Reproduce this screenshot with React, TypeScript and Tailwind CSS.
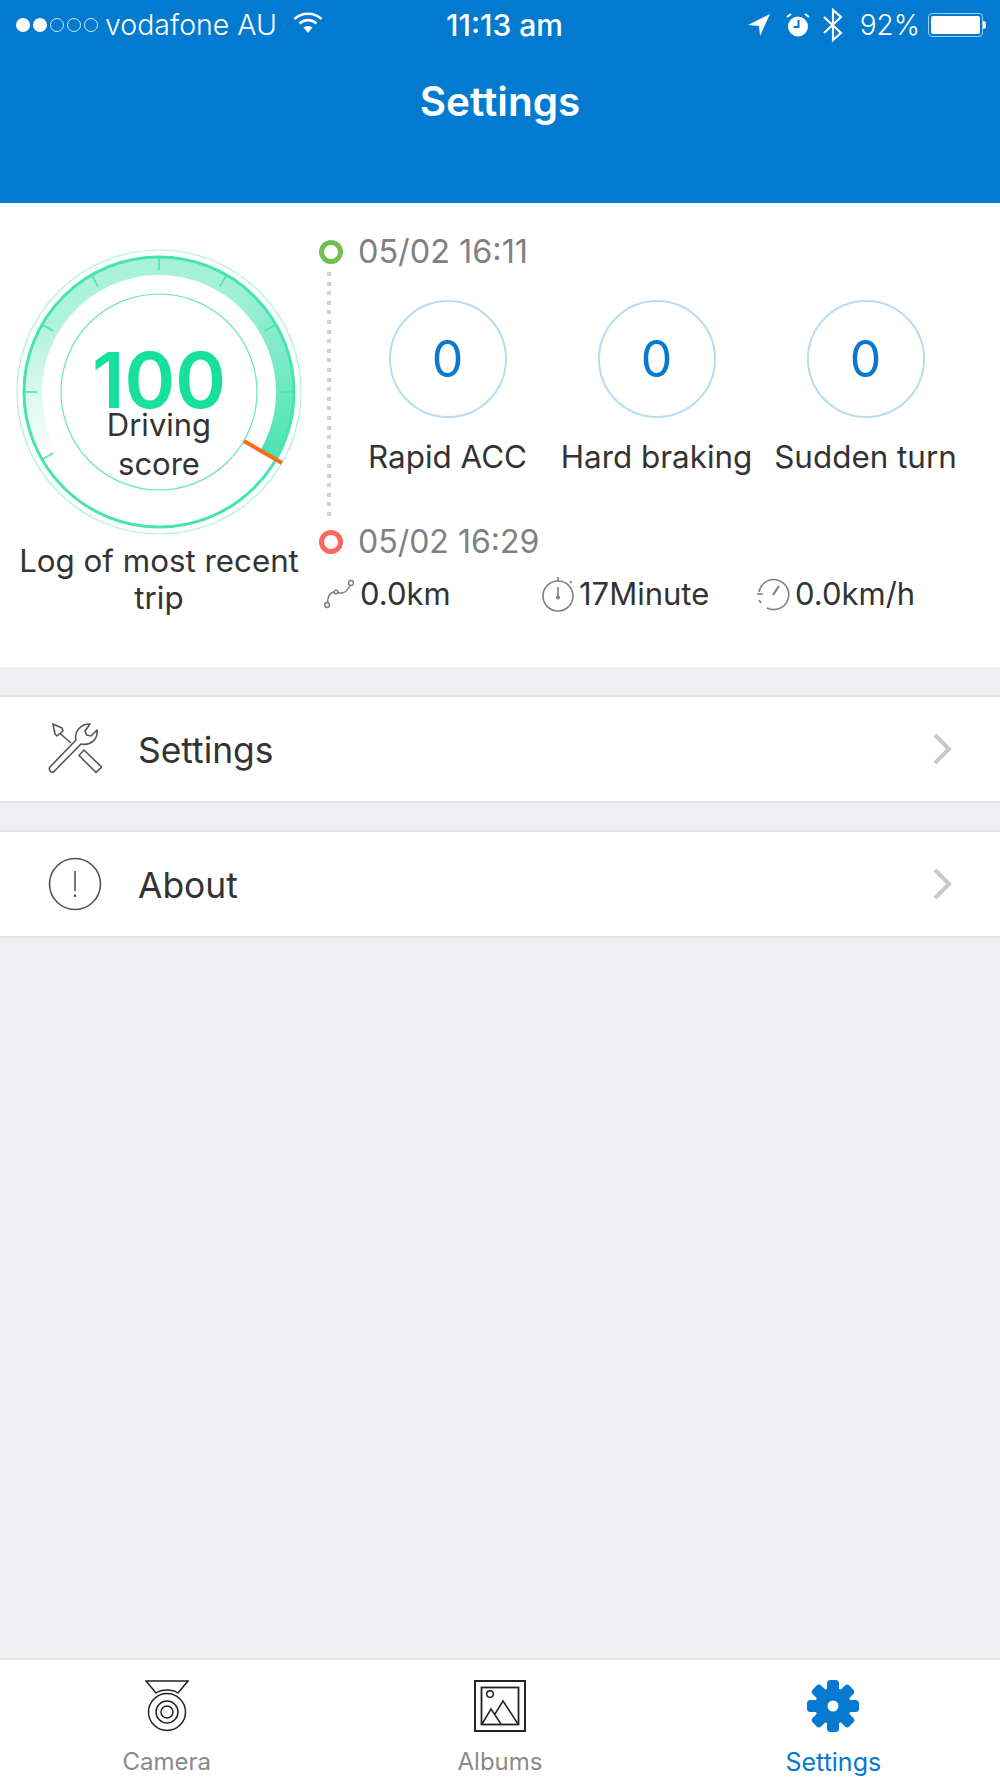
const ANGLES = [0, 30, 60, 90, 120, 240, 270, 300, 330]

const polar = (r: number, deg: number, c = 145) => {
  const a = ((deg - 90) * Math.PI) / 180
  return [c + r * Math.cos(a), c + r * Math.sin(a)]
}

// mix the band colour into white so overlapping segments leave no seams
const bandColor = (op: number) => {
  const mix = (v: number) => Math.round(255 + (v - 255) * op)
  return `rgb(${mix(47)},${mix(223)},${mix(166)})`
}

function Gauge() {
  const segments = []
  for (let d = -122; d < 120; d += 2) {
    const t = (d + 122) / 242
    // t=0 faded bottom-left, t=1 strong at the needle
    let op = 0
    if (t < 0.26) op = (t / 0.26) * 0.38
    else if (t < 0.65) op = 0.38 + ((t - 0.26) / 0.39) * 0.07
    else op = 0.45 + ((t - 0.65) / 0.35) * 0.42
    const [x1, y1] = polar(126, d)
    const [x2, y2] = polar(126, d + 2.6)
    segments.push(
      <path key={d} d={`M${x1} ${y1} A126 126 0 0 1 ${x2} ${y2}`} fill="none" stroke={bandColor(op)} strokeWidth="18" />,
    )
  }
  const [nx1, ny1] = polar(98, 120)
  const [nx2, ny2] = polar(142, 120)
  return (
    <svg width="290" height="290" viewBox="0 0 290 290" className="[grid-area:1/1]">
      <circle cx="145" cy="145" r="142" fill="none" stroke="#a9f3dc" strokeWidth="1.2" />
      {segments}
      <circle cx="145" cy="145" r="135" fill="none" stroke="#45e4b0" strokeWidth="3" />
      <circle cx="145" cy="145" r="98" fill="none" stroke="#6be5bd" strokeWidth="1.2" />
      {ANGLES.map(a => {
        const [x1, y1] = polar(135, a)
        const [x2, y2] = polar(122, a)
        return <line key={a} x1={x1} y1={y1} x2={x2} y2={y2} stroke="#4fe3b4" strokeWidth="1.6" />
      })}
      <line x1={nx1} y1={ny1} x2={nx2} y2={ny2} stroke="#ff6a13" strokeWidth="4" />
    </svg>
  )
}

function Counter({ label }: { label: string }) {
  return (
    <div className="flex flex-col items-center w-[209px]">
      <div className="w-[118px] h-[118px] rounded-full border-2 border-[#b7dcf3] flex items-center justify-center text-[50px] text-[#0679d0]">
        0
      </div>
      <div className="mt-[17px] text-[31.4px] leading-[44px] text-[#333] whitespace-nowrap">{label}</div>
    </div>
  )
}

function RouteIcon() {
  return (
    <svg width="32" height="32" viewBox="0 0 32 32" fill="none" stroke="#808080" strokeWidth="1.5" className="shrink-0">
      <circle cx="4" cy="27" r="2.4" />
      <circle cx="28" cy="5" r="2.4" />
      <circle cx="13" cy="14" r="1.8" />
      <path d="M4.5 24.5C5 17 8 14.5 11 14M15 14.5c5 2 9-1 12-7" />
    </svg>
  )
}

function TimerIcon() {
  return (
    <svg width="34" height="36" viewBox="0 0 34 36" fill="none" stroke="#808080" strokeWidth="1.6" className="shrink-0">
      <circle cx="17" cy="20" r="15" />
      <path d="M17 1v4M29 5l1.5 2" />
      <path d="M17 11v11" />
      <circle cx="17" cy="21.5" r="1.2" fill="#808080" />
    </svg>
  )
}

function SpeedIcon() {
  return (
    <svg width="34" height="34" viewBox="0 0 34 34" fill="none" stroke="#808080" strokeWidth="1.6" className="shrink-0">
      <path d="M3 15A15 15 0 1 1 11 31" />
      <path d="M1 17h6" />
      <path d="M23 9l-6 9" strokeWidth="2.2" />
      <path d="M3 23l2 3" />
    </svg>
  )
}

function ToolsIcon() {
  return (
    <svg width="54" height="54" viewBox="0 0 54 54" fill="none" stroke="#555" strokeWidth="1.6" strokeLinejoin="round" className="shrink-0">
      <path d="M2 45 L28 18 C26 10 32 2 42 2 L37 9 L38.500 13 L43 14 L49 8 C50 17 43 24 33 22 L6 49.500 Q4 51 2.500 49.500 Q0.500 47 2 45 Z" />
      <path d="M5 2 L14 6 L15 9 L9 14 L7 12 Z M12 11.500 L23 21" />
      <path d="M36 28 L53.500 45 L48 50.500 L31 33.500 Z" />
    </svg>
  )
}

function AboutIcon() {
  return (
    <svg width="54" height="54" viewBox="0 0 54 54" fill="none" stroke="#555" strokeWidth="1.6" className="shrink-0">
      <circle cx="27" cy="27" r="25.500" />
      <path d="M27 14v20" />
      <path d="M27 37.500v2.500" strokeWidth="2" />
    </svg>
  )
}

function Row({ icon, label }: { icon: React.ReactNode; label: string }) {
  return (
    <div className="h-[108px] bg-white border-y-2 border-[#e3e3e6] flex items-center pl-[48px] pr-[48px]">
      {icon}
      <span className="ml-[36px] pt-[3px] text-[35.4px] text-[#333]">{label}</span>
      <svg width="20" height="34" viewBox="0 0 20 34" fill="none" stroke="#c7c7cc" strokeWidth="4" className="ml-auto">
        <path d="M3 3l14 14L3 31" />
      </svg>
    </div>
  )
}

function GearIcon() {
  const teeth = [0, 45, 90, 135]
  return (
    <svg width="52" height="52" viewBox="0 0 52 52">
      {teeth.map(t => (
        <rect key={t} x="20" y="0" width="12" height="52" rx="3.5" fill="#0679d0" transform={`rotate(${t} 26 26)`} />
      ))}
      <circle cx="26" cy="26" r="18" fill="#0679d0" />
      <circle cx="26" cy="26" r="5.500" fill="#fff" />
    </svg>
  )
}

function CameraIcon() {
  return (
    <svg width="44" height="52" viewBox="0 0 44 52" fill="none" stroke="#222" strokeWidth="1.500">
      <path d="M1 1h42L33 13C27 9 17 9 11 13Z" />
      <circle cx="22" cy="32" r="18.500" />
      <circle cx="22" cy="32" r="11" />
      <circle cx="22" cy="32" r="6" />
    </svg>
  )
}

function AlbumIcon() {
  return (
    <svg width="52" height="52" viewBox="0 0 52 52" fill="none" stroke="#222">
      <rect x="1" y="1" width="50" height="50" strokeWidth="2" />
      <rect x="7.500" y="7.500" width="37" height="37" strokeWidth="1.800" />
      <circle cx="16" cy="14" r="3.300" strokeWidth="1.500" />
      <path d="M8 44l9-15 10 15M21 34l8-13 15 23" strokeWidth="1.500" />
    </svg>
  )
}

function TabItem({ icon, label, active }: { icon: React.ReactNode; label: string; active?: boolean }) {
  return (
    <div className="flex-1 flex flex-col items-center">
      <div className="h-[52px] flex items-center">{icon}</div>
      <span className={`mt-[15px] leading-[30px] ${active ? 'text-[25px] text-[#0679d0]' : 'text-[24px] text-[#8a8a8a]'}`}>{label}</span>
    </div>
  )
}

export default function App() {
  return (
    <div className="w-[1000px] h-[1778px] flex flex-col bg-[#efeff4] font-['Inter',sans-serif] overflow-hidden">
      <div className="h-[203px] bg-[#027ad0] text-white shrink-0">
        <div className="h-[50px] flex items-center pr-[14px]">
          <div className="w-[446px] shrink-0 pl-[16px] flex items-center text-[28.500px] font-light">
            <div className="flex gap-[3px]">
              <span className="w-[14px] h-[14px] rounded-full bg-white" />
              <span className="w-[14px] h-[14px] rounded-full bg-white" />
              <span className="w-[14px] h-[14px] rounded-full border border-white/80" />
              <span className="w-[14px] h-[14px] rounded-full border border-white/80" />
              <span className="w-[14px] h-[14px] rounded-full border border-white/80" />
            </div>
            <span className="ml-[7px] w-[188px] whitespace-nowrap">vodafone AU</span>
            <svg width="30" height="22" viewBox="0 0 30 22" fill="none" stroke="#fff" strokeWidth="2.600" className="-mt-[4px]">
              <path d="M1.500 7C9 0 21 0 28.500 7M6.500 11.500c5-4.500 12-4.500 17 0" />
              <path d="M10.500 15.500c2.500-2 6.500-2 9 0L15 21Z" fill="#fff" stroke="none" />
            </svg>
          </div>
          <span className="text-[30px] font-medium whitespace-nowrap">11:13 am</span>
          <div className="flex-1 flex items-center justify-end text-[28px] font-light">
            <svg width="23" height="22" viewBox="0 0 23 22" fill="#fff">
              <path d="M22 0L0 11l11 1 1 10Z" />
            </svg>
            <svg width="24" height="24" viewBox="0 0 24 24" fill="#fff" className="ml-[15px]">
              <circle cx="12" cy="13.500" r="10" />
              <path d="M1 4l4-3M23 4l-4-3" stroke="#fff" strokeWidth="2" />
              <path d="M12.500 7v7H7.500" stroke="#027ad0" strokeWidth="2" fill="none" />
            </svg>
            <svg width="20" height="34" viewBox="0 0 20 34" fill="none" stroke="#fff" strokeWidth="2.200" className="ml-[13px]">
              <path d="M1 9l17 16-8 7V2l8 7L1 25" />
            </svg>
            <span className="ml-[17px]">92%</span>
            <div className="ml-[8px] w-[55px] h-[24px] rounded-[4px] border border-[#9fcdf0] p-[2px]">
              <div className="w-full h-full rounded-[2px] bg-white" />
            </div>
            <span className="w-[3px] h-[8px] rounded-r-full bg-white" />
          </div>
        </div>
        <div className="mt-[25px] text-center text-[40.500px] leading-[54px] font-semibold">Settings</div>
      </div>

      <div className="h-[464px] shrink-0 bg-white flex">
        <div className="w-[319px] shrink-0 pl-[14px] pt-[44px] flex flex-col">
          <div className="grid w-[290px]">
            <Gauge />
            <div className="[grid-area:1/1] flex flex-col items-center pt-[108px]">
              <span className="text-[77px] leading-[51px] font-semibold text-[#16e09c]">100</span>
              <span className="text-[31px] leading-[38px] text-[#333]">Driving</span>
              <span className="text-[31px] leading-[38px] text-[#333] mt-[1px]">score</span>
            </div>
          </div>
          <div className="mt-[6px] w-[290px] text-center text-[31.300px] leading-[37px] text-[#333] whitespace-pre-line">{'Log of most recent\ntrip'}</div>
        </div>

        <div className="flex-1 flex flex-col pt-[29px] min-w-0">
          <div className="flex items-center h-[40px]">
            <span className="w-[24px] h-[24px] rounded-full border-[5px] border-[#70bf50]" />
            <span className="ml-[15px] text-[32.400px] text-[#808080] leading-[40px]">05/02 16:11</span>
          </div>
          <div className="flex h-[250px]">
            <div className="ml-[8px] w-[4px] h-[250px] bg-[repeating-linear-gradient(to_bottom,#c8d0de_0,#c8d0de_4px,transparent_4px,transparent_9.600px)]" />
            <div className="flex pt-[28px]">
              <div className="ml-[12px] flex">
                <Counter label="Rapid ACC" />
                <Counter label="Hard braking" />
                <Counter label="Sudden turn" />
              </div>
            </div>
          </div>
          <div className="flex items-center h-[40px]">
            <span className="w-[24px] h-[24px] rounded-full border-[5px] border-[#f9695d]" />
            <span className="ml-[15px] text-[32px] text-[#808080] leading-[40px]">05/02 16:29</span>
          </div>
          <div className="flex items-center mt-[9px] text-[31px] text-[#333]">
            <div className="w-[222px] pl-[4px] flex items-center gap-[5px]"><RouteIcon />0.0km</div>
            <div className="w-[215px] flex items-center gap-[4px]"><TimerIcon />17Minute</div>
            <div className="flex items-center gap-[5px]"><SpeedIcon />0.0km/h</div>
          </div>
        </div>
      </div>

      <div className="mt-[28px]"><Row icon={<ToolsIcon />} label="Settings" /></div>
      <div className="mt-[27px]"><Row icon={<AboutIcon />} label="About" /></div>

      <div className="mt-auto h-[120px] bg-white border-t-2 border-[#e3e3e6] flex pt-[20px]">
        <TabItem icon={<CameraIcon />} label="Camera" />
        <TabItem icon={<AlbumIcon />} label="Albums" />
        <TabItem icon={<GearIcon />} label="Settings" active />
      </div>
    </div>
  )
}
